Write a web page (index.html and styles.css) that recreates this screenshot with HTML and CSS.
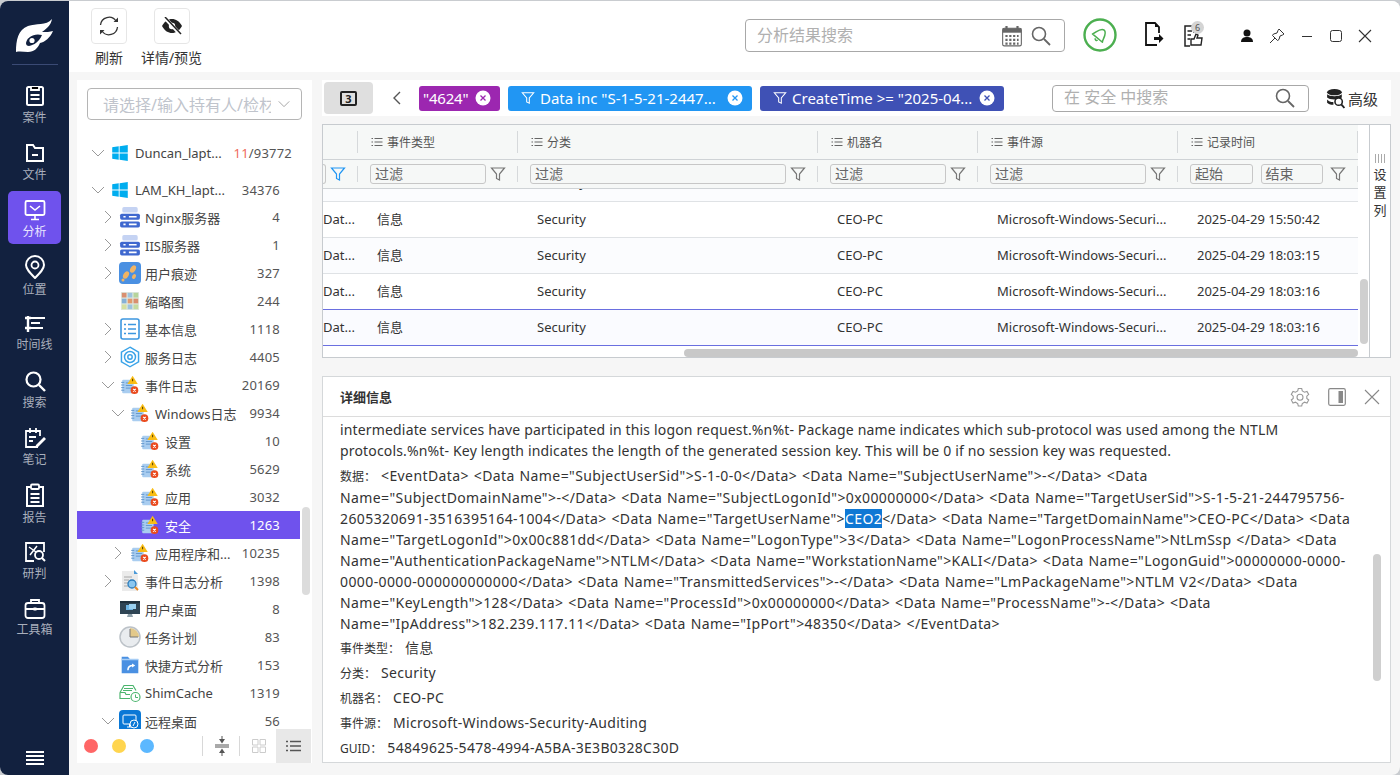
FILE: index.html
```html
<!DOCTYPE html>
<html lang="zh-CN">
<head>
<meta charset="utf-8">
<title>分析</title>
<link rel="stylesheet" href="styles.css">
</head>
<body>
<svg class="defs" width="0" height="0" aria-hidden="true">
  <symbol id="win" viewBox="0 0 16 16"><path fill="#00adef" d="M0 2.300 6.700 1.300V7.600H0ZM7.600 1.200 16 0V7.600H7.600ZM0 8.400H6.700V14.700L0 13.700ZM7.600 8.400H16V16L7.600 14.800Z"/></symbol>
  <symbol id="server" viewBox="0 0 20 20"><rect x="3" y="1" width="14" height="5" rx="1.500" fill="#c5d3f3"/><rect x="1" y="7" width="18" height="5.500" rx="1.500" fill="#3f68cf"/><rect x="1" y="14" width="18" height="5.500" rx="1.500" fill="#3f68cf"/><path stroke="#fff" stroke-width="1.400" d="M4 9.700h2M9 9.700h7M4 16.700h2M9 16.700h7"/></symbol>
  <symbol id="steps" viewBox="0 0 22 22"><rect width="22" height="22" rx="4" fill="#4a90e2"/><ellipse cx="7" cy="13" rx="2.600" ry="4" transform="rotate(30 7 13)" fill="#f0b464"/><ellipse cx="14" cy="7" rx="2.600" ry="4" transform="rotate(30 14 7)" fill="#f0b464"/><ellipse cx="15" cy="14.500" rx="1.800" ry="2.600" transform="rotate(30 15 14.500)" fill="#f0b464"/><circle cx="4" cy="18" r="1.500" fill="#f0b464"/></symbol>
  <symbol id="thumb" viewBox="0 0 16 16"><rect width="16" height="16" fill="#dfe8e0"/><rect x="1" y="1" width="4" height="4" fill="#d98f70"/><rect x="6" y="1" width="4" height="4" fill="#9ec3de"/><rect x="11" y="1" width="4" height="4" fill="#b6d49b"/><rect x="1" y="6" width="4" height="4" fill="#86b1d6"/><rect x="6" y="6" width="4" height="4" fill="#e09a6e"/><rect x="11" y="6" width="4" height="4" fill="#d98f70"/><rect x="1" y="11" width="4" height="4" fill="#d5e0a0"/><rect x="6" y="11" width="4" height="4" fill="#9ec3de"/><rect x="11" y="11" width="4" height="4" fill="#c5dba0"/></symbol>
  <symbol id="info" viewBox="0 0 20 22"><rect x="1" y="1" width="18" height="20" rx="2" fill="#fff" stroke="#3c97e0" stroke-width="1.600"/><path stroke="#3c97e0" stroke-width="1.500" d="M8 6.500h8M8 11h8M8 15.500h8M4 6.500h2M4 11h2M4 15.500h2"/></symbol>
  <symbol id="svc" viewBox="0 0 18 18"><path fill="none" stroke="#39a3e8" stroke-width="1.200" d="M9 1 16 5V13L9 17 2 13V5Z"/><circle cx="9" cy="9" r="4.500" fill="none" stroke="#39a3e8" stroke-width="1.200"/><circle cx="9" cy="9" r="1.800" fill="none" stroke="#39a3e8" stroke-width="1.200"/></symbol>
  <symbol id="evt" viewBox="0 0 18 18"><rect x="1.500" y="4" width="11" height="13" rx="1" fill="#a9cdf0"/><path stroke="#5f95cc" stroke-width=".9" d="M.5 6.500h3M.5 9h3M.5 11.500h3M.5 14h3M5 7h6M5 9.500h6M5 12h6"/><path fill="#f9bd16" d="M11.500 0 16.500 8H6.500Z"/><path stroke="#5a4300" d="M11.500 3v2.500"/><circle cx="13.300" cy="14" r="3.700" fill="#ea4b1f"/><path stroke="#fff" d="M12 12.700 14.600 15.300M14.600 12.700 12 15.300"/></symbol>
  <symbol id="eana" viewBox="0 0 18 22"><path fill="#ebebeb" d="M1 1H13L17 5V21H1Z"/><path fill="#4a9ad8" d="M13 0 17 4H13Z"/><path stroke="#a8a8a8" d="M3 7h8M3 10h5M3 13h4M3 16h4"/><circle cx="11" cy="14" r="4" fill="#8cc7ef" stroke="#2c7dbd" stroke-width="1.300"/><path stroke="#ea8a25" stroke-width="2" d="M14 17 17 20"/></symbol>
  <symbol id="desk" viewBox="0 0 22 18"><rect x="1" y="1" width="20" height="13" fill="#2f4454"/><rect x="1" y="1" width="20" height="2" fill="#1f2f3c"/><rect x="7" y="5" width="7" height="5" fill="#6db4e4"/><rect x="10" y="4" width="7" height="5" fill="#9ad0f0"/><path fill="#8fa0aa" d="M9 14H13L14 17H8Z"/></symbol>
  <symbol id="clock" viewBox="0 0 22 22"><circle cx="11" cy="11" r="10" fill="#e9ecef" stroke="#bcc2c8" stroke-width="1.500"/><path fill="#e3c98a" d="M11 11V2A9 9 0 0 1 20 11Z"/><path stroke="#777" d="M11 11V3M11 11H19"/></symbol>
  <symbol id="short" viewBox="0 0 18 18"><path fill="#4a90e2" d="M1 1H7L9 3.500H17V17H1Z"/><path fill="#a7cdf5" d="M1 3H17V4.500H1Z"/><path fill="none" stroke="#fff" stroke-width="1.500" d="M7 14C7 11 9 9.500 12 9.500"/><path fill="#fff" d="M11 7.500 14 9.500 11 11.500Z"/></symbol>
  <symbol id="shim" viewBox="0 0 22 19"><path fill="none" stroke="#4cb56e" stroke-width="1.200" d="M1 9 5 2H14L17 7M1 9H6L7 11H11M1 9V15H11M5 5H14M4 7H13"/><circle cx="16.500" cy="13.500" r="4.500" fill="#fff" stroke="#4cb56e" stroke-width="1.200"/><path fill="none" stroke="#4cb56e" d="M16.500 11v3h2.500"/></symbol>
  <symbol id="rdp" viewBox="0 0 22 22"><rect width="22" height="22" rx="4" fill="#0a78d6"/><rect x="4" y="5" width="13" height="9" rx="1" fill="none" stroke="#fff"/><path stroke="#fff" d="M8 17h5M10.500 14v3"/><circle cx="15" cy="14" r="4" fill="#0a78d6" stroke="#fff"/><path stroke="#fff" d="M16 12 14 16"/></symbol>
  <symbol id="chev-r" viewBox="0 0 16 16"><path fill="none" stroke="#999" d="M5 2 11 8 5 14"/></symbol>
  <symbol id="chev-d" viewBox="0 0 16 16"><path fill="none" stroke="#999" d="M2 5 8 11 14 5"/></symbol>
  <symbol id="funnel" viewBox="0 0 16 16"><path fill="none" stroke="currentColor" stroke-width="1.200" d="M1.500 2H14.500L9.500 8V14L6.500 12.500V8Z"/></symbol>
  <symbol id="lines" viewBox="0 0 12 12"><path stroke="#666" d="M3.500 2.500H11.500M3.500 6H11.500M3.500 9.500H11.500M.5 2.500H2M.5 6H2M.5 9.500H2"/></symbol>
  <symbol id="search" viewBox="0 0 20 20"><circle cx="8" cy="8" r="6.500" fill="none" stroke="currentColor" stroke-width="1.600"/><path stroke="currentColor" stroke-width="1.800" d="M13 13 19 19"/></symbol>
  <symbol id="x-circle" viewBox="0 0 16 16"><circle cx="8" cy="8" r="7.500" fill="#fff"/><path stroke="currentColor" stroke-width="1.300" d="M5.500 5.500 10.500 10.500M10.500 5.500 5.500 10.500"/></symbol>
</svg>

<div class="app">
  <nav class="rail">
    <div class="logo">
      <svg width="37" height="34" viewBox="0 0 37 34"><path fill="#fff" d="M0 34C0 22 2 12 12 8 20 5 30 8 36 1 35 6 33 9 26 14 30 14 34 14 37 13 34 20 29 24 24 25 22 30 18 34 12 34 8 34 4 33 0 34Z"/><path fill="#12213f" d="M10 25C11 19 18 15 26 17 23 24 18 27 13 28 11 28 10 27 10 25Z"/><circle cx="16" cy="22.500" r="2.600" fill="#fff"/></svg>
    </div>
    <div class="rail-items">
      <a class="rail-item"><svg width="22" height="22" viewBox="0 0 22 22"><rect x="3" y="2" width="16" height="18" rx="1.500" fill="none" stroke="#fff" stroke-width="2"/><path stroke="#fff" stroke-width="1.800" d="M7 2V5H15V2M6.500 10H15.500M6.500 14H15.500"/></svg><span>案件</span></a>
      <a class="rail-item"><svg width="22" height="22" viewBox="0 0 22 22"><path fill="none" stroke="#fff" stroke-width="2" d="M3 3H9L11 6H19V19H3Z"/><path stroke="#fff" stroke-width="1.800" d="M8 13H14"/></svg><span>文件</span></a>
      <a class="rail-item is-active"><svg width="22" height="22" viewBox="0 0 22 22"><rect x="1.500" y="2" width="19" height="14" rx="1.500" fill="none" stroke="#fff" stroke-width="1.800"/><path fill="none" stroke="#fff" stroke-width="1.600" d="M6 7 11 11 16 7M11 16V20M7 20.500H15"/></svg><span>分析</span></a>
      <a class="rail-item"><svg width="22" height="24" viewBox="0 0 22 24"><path fill="none" stroke="#fff" stroke-width="2" d="M11 23C6 18 2 14 2 10A9 9 0 0 1 20 10C20 14 16 18 11 23Z"/><circle cx="11" cy="10" r="3.500" fill="none" stroke="#fff" stroke-width="1.800"/></svg><span>位置</span></a>
      <a class="rail-item"><svg width="22" height="20" viewBox="0 0 22 20"><path stroke="#fff" stroke-width="2" d="M7 4H21M7 9H16M7 14H19"/><path stroke="#fff" stroke-width="2.400" d="M4 2V18M1 4H7M1 14H7"/></svg><span>时间线</span></a>
      <a class="rail-item"><svg width="22" height="22" viewBox="0 0 22 22"><circle cx="9.500" cy="9.500" r="7" fill="none" stroke="#fff" stroke-width="2.200"/><path stroke="#fff" stroke-width="2.400" d="M15 15 21 21"/></svg><span>搜索</span></a>
      <a class="rail-item"><svg width="22" height="22" viewBox="0 0 22 22"><path fill="none" stroke="#fff" stroke-width="1.800" d="M14 20H2V4H16V9M6 1V6M12 1V6M5 10H12M5 14H9"/><path fill="#fff" d="M20 10 22 12 14 20 11 21 12 18Z"/></svg><span>笔记</span></a>
      <a class="rail-item"><svg width="22" height="24" viewBox="0 0 22 24"><path fill="none" stroke="#fff" stroke-width="2" d="M7 4H3V23H19V4H15"/><rect x="7" y="1.500" width="8" height="4.500" rx="1" fill="none" stroke="#fff" stroke-width="1.800"/><path stroke="#fff" stroke-width="1.800" d="M6.500 11H15.500M6.500 15H15.500M6.500 19H15.500"/></svg><span>报告</span></a>
      <a class="rail-item"><svg width="22" height="22" viewBox="0 0 22 22"><path fill="none" stroke="#fff" stroke-width="1.800" d="M10 20H2V2H20V11"/><path stroke="#fff" stroke-width="1.500" d="M5 6 12 11M13 5 6 14"/><circle cx="15" cy="14" r="4" fill="#12213f" stroke="#fff" stroke-width="1.800"/><path stroke="#fff" stroke-width="2" d="M18 17 21 20"/></svg><span>研判</span></a>
      <a class="rail-item"><svg width="22" height="20" viewBox="0 0 22 20"><rect x="1.500" y="4" width="19" height="15" rx="2.500" fill="none" stroke="#fff" stroke-width="1.800"/><path fill="none" stroke="#fff" stroke-width="1.800" d="M7 4V1H15V4M2 10H20"/><rect x="9.500" y="8.500" width="3" height="3" fill="#fff"/></svg><span>工具箱</span></a>
    </div>
    <svg class="rail-menu" width="18" height="14" viewBox="0 0 18 14"><path stroke="#fff" stroke-width="2" d="M0 1H18M0 5H18M0 9H18M0 13H18"/></svg>
  </nav>

  <div class="main">
    <header class="topbar">
      <div class="tool">
        <span class="tool-btn"><svg width="20" height="20" viewBox="0 0 20 20"><path fill="none" stroke="#333" stroke-width="1.300" d="M1.500 9A8.500 8.500 0 0 1 17 5M18.500 11A8.500 8.500 0 0 1 3 15"/><path fill="#333" d="M14.500 6H19V1.500ZM5.500 14H1V18.500Z"/></svg></span>
        <span class="tool-label">刷新</span>
      </div>
      <div class="tool">
        <span class="tool-btn"><svg width="22" height="18" viewBox="0 0 22 18"><path fill="#222" d="M1 9C4 4 7 2 11 2S18 4 21 9C18 14 15 16 11 16S4 14 1 9Z"/><circle cx="11" cy="9" r="3.200" fill="#fff"/><path stroke="#fff" stroke-width="3.600" d="M3 0 19 17"/><path stroke="#222" stroke-width="1.500" d="M4 0 20 17"/></svg></span>
        <span class="tool-label">详情/预览</span>
      </div>
      <div class="search-box top-search">
        <span class="ph">分析结果搜索</span>
        <svg class="cal" width="20" height="22" viewBox="0 0 18 20"><rect x=".5" y="3" width="17" height="16" rx="1.500" fill="#fff" stroke="#666"/><rect x=".5" y="3" width="17" height="4" fill="#666"/><path stroke="#666" stroke-width="2" d="M4 1V4M14 1V4"/><path stroke="#666" stroke-width="2" stroke-dasharray="2 1.500" d="M3 10H15M3 13.500H15M3 17H15"/></svg>
        <svg class="mag" width="20" height="20"><use href="#search"/></svg>
      </div>
      <svg class="bell" width="34" height="34" viewBox="0 0 34 34"><circle cx="17" cy="17" r="15.500" fill="#fff" stroke="#4caf50" stroke-width="2.400"/><g transform="rotate(40 17 17)"><path fill="none" stroke="#4caf50" stroke-width="1.500" stroke-linejoin="round" d="M10.500 21C12.500 19 12 11 17 10.500 22 11 21.500 19 23.500 21Z"/><path fill="none" stroke="#4caf50" stroke-width="1.500" d="M15.500 22.500C16 24 18 24 18.500 22.500"/></g></svg>
      <svg class="ic-export" width="20" height="26" viewBox="0 0 20 26"><path fill="none" stroke="#111" stroke-width="1.800" d="M13 23H2V1H11L15 5V11"/><path fill="#111" d="M11 1 15 5H11ZM10 15H15V12L19.500 16.500 15 21V18H10Z"/></svg>
      <span class="ic-like">
        <svg width="20" height="26" viewBox="0 0 20 26"><path fill="none" stroke="#222" stroke-width="1.500" d="M7 24H2V4H11V11M4.500 9H9M4.500 13H8M4.500 17H7"/><path fill="none" stroke="#222" stroke-width="1.400" d="M8 17H11L13 12 15 13 14 16H19L18 23H8Z"/></svg>
        <b class="badge">6</b>
      </span>
      <div class="win-ctrls">
        <svg width="14" height="14" viewBox="0 0 14 14"><circle cx="7" cy="4" r="3.500" fill="#111"/><path fill="#111" d="M1 13C1 9 4 8 7 8S13 9 13 13Z"/></svg>
        <svg width="16" height="16" viewBox="0 0 16 16"><path fill="none" stroke="#333" d="M10 1 15 6 13.500 7 11 8 10 11.500 8.500 12.500 3.500 7.500 4.500 6 8 5 9 2.500ZM6 10 1 15"/></svg>
        <svg width="14" height="14" viewBox="0 0 14 14"><path stroke="#333" d="M2 7.500H12"/></svg>
        <svg width="14" height="14" viewBox="0 0 14 14"><rect x="1.500" y="1.500" width="11" height="11" rx="2" fill="none" stroke="#333"/></svg>
        <svg width="14" height="14" viewBox="0 0 14 14"><path stroke="#333" stroke-width="1.100" d="M1 1 13 13M13 1 1 13"/></svg>
      </div>
    </header>

    <div class="workspace">
      <aside class="tree-panel">
        <div class="holder-select"><span class="ph-holder">请选择/输入持有人/检材</span><svg width="14" height="14"><use href="#chev-d"/></svg></div>
        <div class="tree">
          <div class="node lv0 top-gap"><svg class="chev"><use href="#chev-d"/></svg><svg class="ico win"><use href="#win"/></svg><span class="label">Duncan_lapt...</span><span class="count wide"><em>11</em>/93772</span></div>
          <div class="node lv0 gap2"><svg class="chev"><use href="#chev-d"/></svg><svg class="ico win"><use href="#win"/></svg><span class="label">LAM_KH_lapt...</span><span class="count">34376</span></div>
          <div class="node lv1"><svg class="chev"><use href="#chev-r"/></svg><svg class="ico"><use href="#server"/></svg><span class="label">Nginx服务器</span><span class="count">4</span></div>
          <div class="node lv1"><svg class="chev"><use href="#chev-r"/></svg><svg class="ico"><use href="#server"/></svg><span class="label">IIS服务器</span><span class="count">1</span></div>
          <div class="node lv1"><svg class="chev"><use href="#chev-r"/></svg><svg class="ico"><use href="#steps"/></svg><span class="label">用户痕迹</span><span class="count">327</span></div>
          <div class="node lv1"><span class="chev"></span><svg class="ico sm"><use href="#thumb"/></svg><span class="label">缩略图</span><span class="count">244</span></div>
          <div class="node lv1"><svg class="chev"><use href="#chev-r"/></svg><svg class="ico"><use href="#info"/></svg><span class="label">基本信息</span><span class="count">1118</span></div>
          <div class="node lv1"><svg class="chev"><use href="#chev-r"/></svg><svg class="ico"><use href="#svc"/></svg><span class="label">服务日志</span><span class="count">4405</span></div>
          <div class="node lv1"><svg class="chev"><use href="#chev-d"/></svg><svg class="ico sm"><use href="#evt"/></svg><span class="label">事件日志</span><span class="count">20169</span></div>
          <div class="node lv2"><svg class="chev"><use href="#chev-d"/></svg><svg class="ico sm"><use href="#evt"/></svg><span class="label">Windows日志</span><span class="count">9934</span></div>
          <div class="node lv3"><span class="chev"></span><svg class="ico sm"><use href="#evt"/></svg><span class="label">设置</span><span class="count">10</span></div>
          <div class="node lv3"><span class="chev"></span><svg class="ico sm"><use href="#evt"/></svg><span class="label">系统</span><span class="count">5629</span></div>
          <div class="node lv3"><span class="chev"></span><svg class="ico sm"><use href="#evt"/></svg><span class="label">应用</span><span class="count">3032</span></div>
          <div class="node lv3 is-selected"><span class="chev"></span><svg class="ico sm"><use href="#evt"/></svg><span class="label">安全</span><span class="count">1263</span></div>
          <div class="node lv2"><svg class="chev"><use href="#chev-r"/></svg><svg class="ico sm"><use href="#evt"/></svg><span class="label">应用程序和...</span><span class="count">10235</span></div>
          <div class="node lv1"><svg class="chev"><use href="#chev-r"/></svg><svg class="ico"><use href="#eana"/></svg><span class="label">事件日志分析</span><span class="count">1398</span></div>
          <div class="node lv1"><span class="chev"></span><svg class="ico"><use href="#desk"/></svg><span class="label">用户桌面</span><span class="count">8</span></div>
          <div class="node lv1"><span class="chev"></span><svg class="ico"><use href="#clock"/></svg><span class="label">任务计划</span><span class="count">83</span></div>
          <div class="node lv1"><span class="chev"></span><svg class="ico sm"><use href="#short"/></svg><span class="label">快捷方式分析</span><span class="count">153</span></div>
          <div class="node lv1"><span class="chev"></span><svg class="ico"><use href="#shim"/></svg><span class="label">ShimCache</span><span class="count">1319</span></div>
          <div class="node lv1"><svg class="chev"><use href="#chev-d"/></svg><svg class="ico"><use href="#rdp"/></svg><span class="label">远程桌面</span><span class="count">56</span></div>
          <div class="tree-scroll"></div>
        </div>
        <footer class="tree-foot">
          <i class="dot red"></i><i class="dot yellow"></i><i class="dot blue"></i>
          <span class="foot-sep first"></span>
          <svg class="foot-ic" width="14" height="20" viewBox="0 0 14 20"><path stroke="#555" d="M0 9H14M0 11H14"/><path fill="#555" d="M4 3H6.500V0H7.500V3H10L7 7.500ZM4 17H6.500V20H7.500V17H10L7 12.500Z"/></svg>
          <span class="foot-sep"></span>
          <svg class="foot-ic" width="14" height="14" viewBox="0 0 14 14"><path fill="none" stroke="#ccc" d="M.5.500H6V6H.5ZM8 .500H13.500V6H8ZM.5 8H6V13.500H.5ZM8 8H13.500V13.500H8Z"/></svg>
          <span class="foot-active"><svg width="15" height="12" viewBox="0 0 15 12"><path stroke="#555" stroke-width="1.600" d="M4 1.500H15M4 6H15M4 10.500H15M0 1.500H2M0 6H2M0 10.500H2"/></svg></span>
        </footer>
      </aside>

      <section class="content">
        <div class="filterbar">
          <button class="num-btn"><span class="num-ic">3</span></button>
          <svg class="back" width="10" height="14" viewBox="0 0 10 14"><path fill="none" stroke="#555" stroke-width="1.400" d="M8 1 2 7 8 13"/></svg>
          <span class="chip purple"><span class="chip-text">"4624"</span><svg class="chip-x"><use href="#x-circle"/></svg></span>
          <span class="chip sky"><svg class="chip-f"><use href="#funnel"/></svg><span class="chip-text">Data inc "S-1-5-21-2447...</span><svg class="chip-x"><use href="#x-circle"/></svg></span>
          <span class="chip indigo"><svg class="chip-f"><use href="#funnel"/></svg><span class="chip-text">CreateTime &gt;= "2025-04...</span><svg class="chip-x"><use href="#x-circle"/></svg></span>
          <div class="search-box inner-search"><span class="ph">在 安全 中搜索</span><svg class="mag" width="20" height="20"><use href="#search"/></svg></div>
          <span class="advanced">
            <svg width="19" height="21" viewBox="0 0 18 20"><ellipse cx="8" cy="4" rx="7" ry="3" fill="#222"/><path fill="#222" d="M1 6C3 8.500 13 8.500 15 6V9C13 11.500 3 11.500 1 9ZM1 11C3 13.500 6 13.500 7 13.500V16C4 16 2 15 1 14Z"/><circle cx="12" cy="13" r="3.500" fill="#fff" stroke="#222" stroke-width="1.500"/><path stroke="#222" stroke-width="1.800" d="M14.500 15.500 17.500 19"/></svg>
            高级
          </span>
        </div>

        <div class="table-panel">
          <div class="table">
            <div class="t-row t-head">
              <div class="t-cell"></div>
              <div class="t-cell"><svg class="hl"><use href="#lines"/></svg>事件类型</div>
              <div class="t-cell"><svg class="hl"><use href="#lines"/></svg>分类</div>
              <div class="t-cell"><svg class="hl"><use href="#lines"/></svg>机器名</div>
              <div class="t-cell"><svg class="hl"><use href="#lines"/></svg>事件源</div>
              <div class="t-cell"><svg class="hl"><use href="#lines"/></svg>记录时间</div>
            </div>
            <div class="t-row t-filter">
              <div class="t-cell"><span class="stub"></span><svg class="fn on"><use href="#funnel"/></svg></div>
              <div class="t-cell"><span class="f-input">过滤</span><svg class="fn"><use href="#funnel"/></svg></div>
              <div class="t-cell"><span class="f-input">过滤</span><svg class="fn"><use href="#funnel"/></svg></div>
              <div class="t-cell"><span class="f-input">过滤</span><svg class="fn"><use href="#funnel"/></svg></div>
              <div class="t-cell"><span class="f-input">过滤</span><svg class="fn"><use href="#funnel"/></svg></div>
              <div class="t-cell"><span class="f-input">起始</span><span class="f-input">结束</span><svg class="fn"><use href="#funnel"/></svg></div>
            </div>
            <div class="t-body">
              <div class="t-row d-row partial"><div class="clip">Dat...</div><div>信息</div><div>Security</div><div>CEO-PC</div><div>Microsoft-Windows-Securi...</div><div>2025-04-29 15:50:42</div></div>
              <div class="t-row d-row"><div class="clip">Dat...</div><div>信息</div><div>Security</div><div>CEO-PC</div><div>Microsoft-Windows-Securi...</div><div>2025-04-29 15:50:42</div></div>
              <div class="t-row d-row"><div class="clip">Dat...</div><div>信息</div><div>Security</div><div>CEO-PC</div><div>Microsoft-Windows-Securi...</div><div>2025-04-29 18:03:15</div></div>
              <div class="t-row d-row"><div class="clip">Dat...</div><div>信息</div><div>Security</div><div>CEO-PC</div><div>Microsoft-Windows-Securi...</div><div>2025-04-29 18:03:16</div></div>
              <div class="t-row d-row selected"><div class="clip">Dat...</div><div>信息</div><div>Security</div><div>CEO-PC</div><div>Microsoft-Windows-Securi...</div><div>2025-04-29 18:03:16</div></div>
            </div>
            <div class="vbar"></div>
            <div class="hbar"></div>
          </div>
          <div class="col-set"><span class="col-set-ic"></span><span class="col-set-t">设置列</span></div>
        </div>

        <div class="detail">
          <div class="detail-head">
            <span class="detail-title">详细信息</span>
            <svg width="20" height="20" viewBox="0 0 20 20"><path fill="none" stroke="#999" stroke-width="1.100" d="M8.300 1.500H11.700L12.300 4 14.500 5.200 17 4.500 18.700 7.500 16.800 9.200V11.500L18.700 13 17 16 14.500 15.200 12.300 16.500 11.700 19H8.300L7.700 16.500 5.500 15.200 3 16 1.300 13 3.200 11.500V9.200L1.300 7.500 3 4.500 5.500 5.200 7.700 4Z"/><circle cx="10" cy="10.300" r="3" fill="none" stroke="#999" stroke-width="1.100"/></svg>
            <svg width="18" height="18" viewBox="0 0 18 18"><rect x=".7" y=".7" width="16.600" height="16.600" rx="1.500" fill="none" stroke="#888" stroke-width="1.200"/><rect x="10.500" y="3" width="4.500" height="12" fill="#888"/></svg>
            <svg width="16" height="16" viewBox="0 0 16 16"><path stroke="#888" stroke-width="1.100" d="M1 1 15 15M15 1 1 15"/></svg>
          </div>
          <div class="detail-body">
            <p class="para first">intermediate services have participated in this logon request.%n%t- Package name indicates which sub-protocol was used among the NTLM<br>protocols.%n%t- Key length indicates the length of the generated session key. This will be 0 if no session key was requested.</p>
            <p class="para data"><span class="k">数据：</span>&lt;EventData&gt; &lt;Data Name="SubjectUserSid"&gt;S-1-0-0&lt;/Data&gt; &lt;Data Name="SubjectUserName"&gt;-&lt;/Data&gt; &lt;Data<br>Name="SubjectDomainName"&gt;-&lt;/Data&gt; &lt;Data Name="SubjectLogonId"&gt;0x00000000&lt;/Data&gt; &lt;Data Name="TargetUserSid"&gt;S-1-5-21-244795756-<br>2605320691-3516395164-1004&lt;/Data&gt; &lt;Data Name="TargetUserName"&gt;<mark>CEO2</mark>&lt;/Data&gt; &lt;Data Name="TargetDomainName"&gt;CEO-PC&lt;/Data&gt; &lt;Data<br>Name="TargetLogonId"&gt;0x00c881dd&lt;/Data&gt; &lt;Data Name="LogonType"&gt;3&lt;/Data&gt; &lt;Data Name="LogonProcessName"&gt;NtLmSsp &lt;/Data&gt; &lt;Data<br>Name="AuthenticationPackageName"&gt;NTLM&lt;/Data&gt; &lt;Data Name="WorkstationName"&gt;KALI&lt;/Data&gt; &lt;Data Name="LogonGuid"&gt;00000000-0000-<br>0000-0000-000000000000&lt;/Data&gt; &lt;Data Name="TransmittedServices"&gt;-&lt;/Data&gt; &lt;Data Name="LmPackageName"&gt;NTLM V2&lt;/Data&gt; &lt;Data<br>Name="KeyLength"&gt;128&lt;/Data&gt; &lt;Data Name="ProcessId"&gt;0x00000000&lt;/Data&gt; &lt;Data Name="ProcessName"&gt;-&lt;/Data&gt; &lt;Data<br>Name="IpAddress"&gt;182.239.117.11&lt;/Data&gt; &lt;Data Name="IpPort"&gt;48350&lt;/Data&gt; &lt;/EventData&gt;</p>
            <p class="field"><span class="k">事件类型：</span>信息</p>
            <p class="field"><span class="k">分类：</span>Security</p>
            <p class="field"><span class="k">机器名：</span>CEO-PC</p>
            <p class="field"><span class="k">事件源：</span>Microsoft-Windows-Security-Auditing</p>
            <p class="field"><span class="k">GUID：</span>54849625-5478-4994-A5BA-3E3B0328C30D</p>
            <div class="detail-scroll"></div>
          </div>
        </div>
      </section>
    </div>
  </div>
</div>
</body>
</html>
```
FILE: styles.css
```css
* { box-sizing: border-box; }
html, body { margin: 0; height: 100%; overflow: hidden; }
body {
  font-family: "Noto Sans", "Noto Sans CJK SC", sans-serif;
  font-size: 13px;
  color: #333;
  background: #c9ccd0;
}
.defs { position: absolute; }
.app {
  display: flex;
  height: 774px;
  margin-top: 1px;
  border-radius: 8px;
  overflow: hidden;
  background: #f6f6f6;
}

/* rail */
.rail {
  width: 69px;
  flex: none;
  background: #12213f;
  display: flex;
  flex-direction: column;
  align-items: center;
  position: relative;
}
.logo {
  width: 46px;
  height: 64px;
  padding-top: 17px;
  display: flex;
  justify-content: center;
  border-bottom: 1px solid #3a4a74;
}
.rail-items { display: flex; flex-direction: column; margin-top: 10px; }
.rail-item {
  width: 53px;
  height: 53px;
  margin: 2px 0;
  padding-top: 4px;
  display: flex;
  flex-direction: column;
  align-items: center;
  justify-content: center;
  gap: 3px;
  border-radius: 5px;
  font-size: 12px;
  color: #a9afbc;
  line-height: 16px;
}
.rail-item.is-active { background: #6f52ed; color: #e9e5ff; }
.rail-menu { position: absolute; left: 26px; bottom: 10px; }

/* main */
.main { flex: 1; display: flex; flex-direction: column; min-width: 0; }
.topbar {
  height: 71px;
  flex: none;
  background: #fff;
  display: flex;
  align-items: flex-start;
  padding-left: 22px;
}
.tool { display: flex; flex-direction: column; align-items: center; width: 61px; margin-top: 7px; margin-right: 1px; }
.tool:first-child { width: 36px; margin-right: 14px; }
.tool-btn {
  width: 36px;
  height: 36px;
  border: 1px solid #e6e6e6;
  border-radius: 4px;
  display: flex;
  align-items: center;
  justify-content: center;
}
.tool-label { margin-top: 5px; font-size: 14px; color: #333; line-height: 18px; white-space: nowrap; }
.search-box {
  display: flex;
  align-items: center;
  border: 1px solid #a8a8a8;
  border-radius: 4px;
  background: #fff;
  color: #666;
}
.ph { font-size: 16px; line-height: 20px; color: #b0b0b0; flex: 1; white-space: nowrap; margin-top: -2px; }
.top-search { width: 320px; height: 33px; margin: 18px 0 0 542px; padding: 0 13px 0 11px; }
.cal { margin-right: 9px; }
.bell { margin: 17px 0 0 18px; }
.ic-export { margin: 21px 0 0 27px; }
.ic-like { position: relative; margin: 21px 0 0 19px; height: 26px; }
.badge {
  position: absolute;
  left: 8px;
  top: -1px;
  width: 13px;
  height: 13px;
  border-radius: 50%;
  background: #d4d4d4;
  color: #555;
  font: 400 9px/13px "Noto Sans", sans-serif;
  text-align: center;
}
.win-ctrls { display: flex; align-items: center; gap: 15px; margin: 27px 0 0 37px; }

/* workspace */
.workspace { flex: 1; display: flex; padding: 8px 9px 12px 8px; gap: 10px; min-height: 0; }

/* tree */
.tree-panel {
  width: 235px;
  flex: none;
  background: #fff;
  display: flex;
  flex-direction: column;
  position: relative;
}
.holder-select {
  margin: 8px 10px 0;
  height: 32px;
  flex: none;
  border: 1px solid #b5b5b5;
  border-radius: 4px;
  display: flex;
  align-items: center;
  padding: 0 10px 0 15px;
  gap: 6px;
}
.ph-holder { font-size: 16px; color: #c0c4cc; flex: 1; overflow: hidden; white-space: nowrap; }
.tree { flex: 1; overflow: hidden; position: relative; min-height: 0; }
.node {
  height: 28px;
  display: flex;
  align-items: center;
  padding-right: 20px;
  width: 223px;
  color: #444;
}
.top-gap { margin-top: 19px; }
.gap2 { margin-top: 9px; margin-bottom: -1px; }
.lv0 { padding-left: 13px; }
.lv1 { padding-left: 23px; }
.lv2 { padding-left: 33px; }
.lv3 { padding-left: 43px; }
.chev { width: 16px; height: 16px; flex: none; }
.ico { width: 22px; height: 22px; flex: none; margin: 0 4px 0 3px; }
.ico.sm { transform: scale(.85); }
.ico.win { transform: scale(.72); }
.label { flex: 1; white-space: nowrap; overflow: hidden; }
.count { text-align: right; white-space: nowrap; color: #555; letter-spacing: .2px; }
.count.wide { margin-right: -12px; }
.count em { font-style: normal; color: #f06a5b; }
.is-selected { background: #6f52ed; color: #fff; }
.is-selected .count { color: #fff; }
.tree-scroll {
  position: absolute;
  left: 225px;
  top: 387px;
  width: 8px;
  height: 88px;
  border-radius: 4px;
  background: #dcdcdc;
}
.tree-foot {
  height: 34px;
  flex: none;
  display: flex;
  align-items: center;
  background: #fff;
  padding-left: 7px;
}
.dot { width: 14px; height: 14px; border-radius: 50%; margin-right: 14px; flex: none; }
.dot.red { background: #ff6666; }
.dot.yellow { background: #ffd54f; }
.dot.blue { background: #5cb8ff; }
.foot-sep { width: 1px; height: 20px; background: #d8d8d8; margin: 0 12px 0 10px; }
.foot-sep.first { margin-left: 34px; }
.foot-ic { flex: none; }
.foot-active {
  width: 35px;
  height: 34px;
  margin-left: 10px;
  background: #e8e8e8;
  display: flex;
  align-items: center;
  justify-content: center;
}

/* content */
.content { flex: 1; min-width: 0; display: flex; flex-direction: column; }
.filterbar {
  height: 36px;
  flex: none;
  background: #fff;
  display: flex;
  align-items: center;
  padding: 0 0 0 2px;
}
.num-btn {
  width: 49px;
  height: 32px;
  border: 0;
  border-radius: 4px;
  background: #dfdfdf;
  display: flex;
  align-items: center;
  justify-content: center;
  padding: 0;
}
.num-ic {
  width: 17px;
  height: 15px;
  border: 2px solid #222;
  border-radius: 2px;
  font: 700 11px/11px "Noto Sans", sans-serif;
  color: #222;
  text-align: center;
}
.back { margin: 0 17px 0 19px; flex: none; }
.chip {
  height: 25px;
  border-radius: 3px;
  display: flex;
  align-items: center;
  color: #fff;
  font-size: 15px;
  margin-right: 8px;
  flex: none;
  padding: 0 9px 0 13px;
  white-space: nowrap;
}
.chip.purple { background: #9c27b0; width: 81px; padding: 0 9px 0 4px; justify-content: space-between; }
.purple .chip-text { letter-spacing: -.2px; }
.chip.sky { background: #2196f3; width: 244px; }
.chip.indigo { background: #3f51b5; width: 244px; }
.chip-f { width: 14px; height: 14px; margin-right: 5px; flex: none; }
.chip-text { flex: 1; overflow: hidden; }
.chip-x { width: 16px; height: 16px; flex: none; }
.purple .chip-x { color: #9c27b0; }
.sky .chip-x { color: #2196f3; }
.indigo .chip-x { color: #3f51b5; }
.inner-search { width: 257px; height: 27px; margin-left: 40px; padding: 0 13px 0 11px; }
.advanced { display: flex; align-items: center; gap: 3px; margin-left: 17px; font-size: 15px; color: #333; white-space: nowrap; }

/* table */
.table-panel {
  margin-top: 8px;
  height: 234px;
  flex: none;
  display: flex;
  border: 1px solid #c7cbcf;
  background: #fff;
}
.table { flex: 1; min-width: 0; position: relative; overflow: hidden; border-right: 1px solid #c7cbcf; }
.t-row {
  display: grid;
  grid-template-columns: 35px 160px 300px 160px 200px 180px;
  width: 1035px;
}
.t-head, .t-filter { background: #f6f8f7; }
.t-head { height: 34px; font-size: 12px; color: #555; }
.t-filter { height: 30px; border-top: 1px solid #cfd3d6; border-bottom: 1px solid #cfd3d6; }
.t-cell {
  display: flex;
  align-items: center;
  padding-left: 13px;
  position: relative;
}
.t-cell::after {
  content: "";
  position: absolute;
  right: 0;
  top: 6px;
  bottom: 6px;
  width: 1px;
  background: #d6d9db;
}
.hl { width: 12px; height: 12px; margin-right: 4px; flex: none; }
.t-filter .t-cell { padding-left: 12px; gap: 3px; }
.t-filter .t-cell:first-child { padding-left: 0; justify-content: space-between; padding-right: 12px; }
.stub { width: 3px; height: 20px; border: 1px solid #c7c7c7; border-left: 0; border-radius: 0 3px 3px 0; }
.f-input {
  flex: 1;
  height: 20px;
  border: 1px solid #c7c7c7;
  border-radius: 3px;
  padding-left: 4px;
  font-size: 14px;
  line-height: 17px;
  color: #666;
  min-width: 0;
}
.t-filter .t-cell:last-child { gap: 8px; }
.t-filter .t-cell:last-child .fn { margin-left: -1px; }
.fn { width: 16px; height: 16px; margin-left: 1px; margin-right: 12px; color: #777; flex: none; }
.fn.on { color: #2196f3; margin-right: 0; }
.t-body { height: 169px; overflow: hidden; }
.d-row {
  height: 36px;
  padding-bottom: 2px;
  align-items: center;
  border-bottom: 1px solid #dfe2e5;
  color: #333;
  white-space: nowrap;
}
.d-row > div { padding-left: 19px; overflow: hidden; }
.d-row > .clip { padding-left: 0; padding-right: 6px; text-align: right; overflow: hidden; }
.d-row:nth-child(odd) { background: #fbfcfe; }
.d-row.partial { margin-top: -23px; padding-bottom: 4px; }
.d-row.selected {
  background: #fafbff;
  border-top: 1px solid #6a6fe0;
  border-bottom: 1px solid #6a6fe0;
  margin-top: -1px;
  height: 37px;
}
.vbar { position: absolute; left: 1037px; top: 154px; width: 8px; height: 65px; border-radius: 4px; background: #cfcfcf; }
.hbar { position: absolute; left: 361px; bottom: 0; width: 674px; height: 8px; border-radius: 4px; background: #c8c8c8; }
.col-set { width: 20px; flex: none; display: flex; flex-direction: column; align-items: center; padding-top: 29px; }
.col-set-ic {
  width: 11px;
  height: 9px;
  background: repeating-linear-gradient(90deg, #aaa 0 1px, transparent 1px 3px);
  margin-bottom: 2px;
}
.col-set-t { width: 14px; font-size: 13px; line-height: 18px; text-align: center; color: #333; }

/* detail */
.detail {
  margin-top: 18px;
  flex: 1;
  min-height: 0;
  display: flex;
  flex-direction: column;
  background: #fff;
  border: 1px solid #d5d8da;
}
.detail-head {
  height: 40px;
  flex: none;
  display: flex;
  align-items: center;
  gap: 18px;
  padding: 0 10px 0 17px;
  border-bottom: 1px solid #dcdcdc;
}
.detail-title { flex: 1; font-size: 13px; font-weight: 700; color: #333; }
.detail-body { flex: 1; min-height: 0; overflow: hidden; padding: 2px 0 0 17px; position: relative; }
.para { margin: 0 0 4px; font-size: 14px; line-height: 21px; white-space: nowrap; color: #333; }
.para.first { letter-spacing: .16px; }
.para.data { letter-spacing: .4px; word-spacing: .8px; margin-bottom: 1px; }
.field { margin: 0; height: 25px; font-size: 14px; line-height: 25px; color: #333; white-space: nowrap; letter-spacing: .3px; }
.k { font-size: 12px; margin-right: 5px; color: #333; letter-spacing: 0; }
mark { background: #0f78d4; color: #fff; }
.detail-scroll { position: absolute; left: 1050px; top: 137px; width: 8px; height: 127px; border-radius: 4px; background: #cfcfcf; }
```
